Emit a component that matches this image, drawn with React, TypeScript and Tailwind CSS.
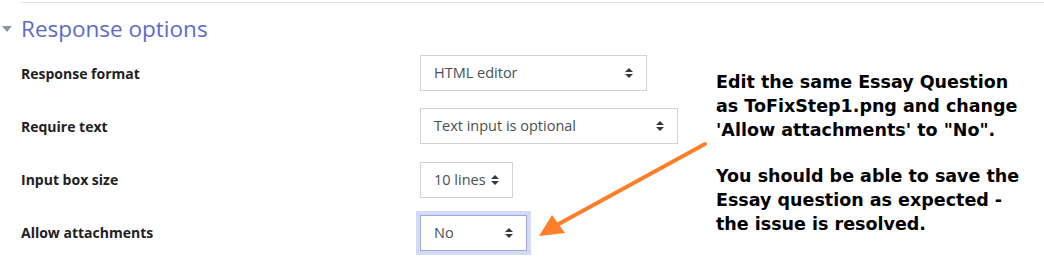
import React from "react";

const rows = [
  { label: "Response format", value: "HTML editor", width: "w-[227px]" },
  { label: "Require text", value: "Text input is optional", width: "w-[258px]" },
  { label: "Input box size", value: "10 lines", width: "w-[93px]" },
  { label: "Allow attachments", value: "No", width: "w-[107px]", focused: true },
];

function UpDown() {
  return (
    <svg width="8" height="10" viewBox="0 0 8 10" className="shrink-0">
      <path d="M4 0 L8 4 L0 4 Z" fill="#343a40" />
      <path d="M0 6 L8 6 L4 10 Z" fill="#343a40" />
    </svg>
  );
}

function Select({ value, width, focused }: { value: string; width: string; focused?: boolean }) {
  return (
    <div
      className={
        "h-[36px] flex items-center justify-between pl-[13px] pr-[13px] bg-white border text-[14.5px] text-[#495057] " +
        width +
        (focused ? " border-[#9aa8e0] shadow-[0_0_0_4px_#d4daf3]" : " border-[#ced4da]")
      }
    >
      <span>{value}</span>
      <UpDown />
    </div>
  );
}

export default function App() {
  return (
    <div className="relative w-[1044px] h-[268px] bg-white overflow-hidden" style={{ fontFamily: '"Open Sans", sans-serif' }}>
      <div className="ml-[21px] mt-[2px] border-t border-[#dfdfe8]" />

      <div className="flex items-center h-[38px] mt-[7px]">
        <svg width="10" height="6" viewBox="0 0 10 6" className="ml-[2px] mr-[9px]">
          <path d="M0 0 L10 0 L5 6 Z" fill="#8f959e" />
        </svg>
        <h3 className="text-[22.5px] text-[#5a6cc8] leading-none">Response options</h3>
      </div>

      <div className="flex flex-col gap-[17.33px] mt-[7px]">
        {rows.map((r) => (
          <div key={r.label} className="flex items-center">
            <div className="w-[420px] shrink-0 pl-[21px] text-[14px] font-bold text-[#1d2125]">{r.label}</div>
            <Select value={r.value} width={r.width} focused={r.focused} />
          </div>
        ))}
      </div>

      <div
        className="absolute left-[716px] top-[70px] text-[17.5px] font-bold leading-[24px] text-black"
        style={{ fontFamily: '"DejaVu Sans", Verdana, sans-serif' }}
      >
        <p>Edit the same Essay Question</p>
        <p>as ToFixStep1.png and change</p>
        <p>'Allow attachments' to "No".</p>
        <p className="mt-[22px]">You should be able to save the</p>
        <p>Essay question as expected -</p>
        <p>the issue is resolved.</p>
      </div>

      <svg className="absolute left-0 top-0 pointer-events-none" width="1044" height="268">
        <line x1="705" y1="144" x2="555" y2="226" stroke="#fd7f2a" strokeWidth="4" strokeLinecap="round" />
        <polygon points="539,236 552,215 565,233" fill="#fd7f2a" />
      </svg>
    </div>
  );
}
